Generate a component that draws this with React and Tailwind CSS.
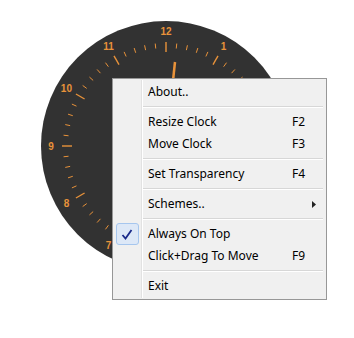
import React from 'react';

const ORANGE = '#e8923a';

// hours 2-6 sit under the context menu, so only the visible ones are drawn
const VISIBLE_HOURS = [7, 8, 9, 10, 11, 12, 1];

const Clock = () => {
  const cx = 125;
  const cy = 125;
  const ticks = [];
  for (let i = 0; i < 60; i++) {
    const a = (i * 6 * Math.PI) / 180;
    const hour = i % 5 === 0;
    const r1 = hour ? 94 : 98;
    const r2 = hour ? 104 : 103;
    ticks.push(
      <line
        key={i}
        x1={cx + r1 * Math.sin(a)}
        y1={cy - r1 * Math.cos(a)}
        x2={cx + r2 * Math.sin(a)}
        y2={cy - r2 * Math.cos(a)}
        stroke={ORANGE}
        strokeWidth={hour ? 1.4 : 1}
      />
    );
  }
  const nums = VISIBLE_HOURS.map((h) => {
    const a = (h * 30 * Math.PI) / 180;
    return (
      <text
        key={h}
        x={cx + 115 * Math.sin(a)}
        y={cy - 115 * Math.cos(a) + 3.6}
        textAnchor="middle"
        fontSize="10"
        fontWeight="bold"
        fontFamily="'Liberation Sans', Arial, sans-serif"
        fill={ORANGE}
      >
        {h}
      </text>
    );
  });
  return (
    <svg width="251" height="251" viewBox="0 0 251 251">
      <circle cx={cx} cy={cy} r="125" fill="#323232" />
      {ticks}
      {nums}
      <line x1={cx} y1={cy} x2={134} y2={41} stroke={ORANGE} strokeWidth="2.5" />
    </svg>
  );
};

const Item = ({ label, keyName, check, arrow }) => (
  <div className="flex h-[22px] items-center">
    <div className="flex w-[28px] justify-center">
      {check && (
        <div className="flex h-[22px] w-[23px] items-center justify-center rounded-[3px] border border-[#a6c6ee] bg-[#dde8f7]">
          <svg width="12" height="11" viewBox="0 0 12 11">
            <path d="M1.5 6 L4.5 9.5 L10.5 1" fill="none" stroke="#1a2a8a" strokeWidth="1.8" />
          </svg>
        </div>
      )}
    </div>
    <div className="ml-[7px] flex-1">{label}</div>
    <div className="w-[20px]">{keyName}</div>
    <div className="flex w-[14px] items-center">
      {arrow && (
        <svg width="4" height="7" viewBox="0 0 4 7">
          <path d="M0 0 L4 3.5 L0 7 Z" fill="#222" />
        </svg>
      )}
    </div>
  </div>
);

const Sep = () => (
  <div className="flex h-[8px] items-center pl-[30px] pr-[3px]">
    <div className="h-[2px] w-full border-t border-b border-t-[#d7d7d7] border-b-white" />
  </div>
);

export default function App() {
  return (
    <div className="relative h-[338px] w-[354px] bg-white pl-[41px] pt-[21px]">
      <Clock />
      <div
        className="absolute left-[112px] top-[78px] w-[215px] border border-[#979797] bg-[#f0f0f0] py-[1px] text-[12px] text-black"
        style={{ fontFamily: "'Noto Sans', 'Open Sans', sans-serif" }}
      >
        <div className="relative py-[1px]">
          <div className="absolute bottom-0 left-[28px] top-0 w-[2px] border-l border-r border-l-[#e2e2e2] border-r-white" />
          <div className="relative">
            <Item label="About.." />
            <Sep />
            <Item label="Resize Clock" keyName="F2" />
            <Item label="Move Clock" keyName="F3" />
            <Sep />
            <Item label="Set Transparency" keyName="F4" />
            <Sep />
            <Item label="Schemes.." arrow />
            <Sep />
            <Item label="Always On Top" check />
            <Item label="Click+Drag To Move" keyName="F9" />
            <Sep />
            <Item label="Exit" />
          </div>
        </div>
      </div>
    </div>
  );
}
